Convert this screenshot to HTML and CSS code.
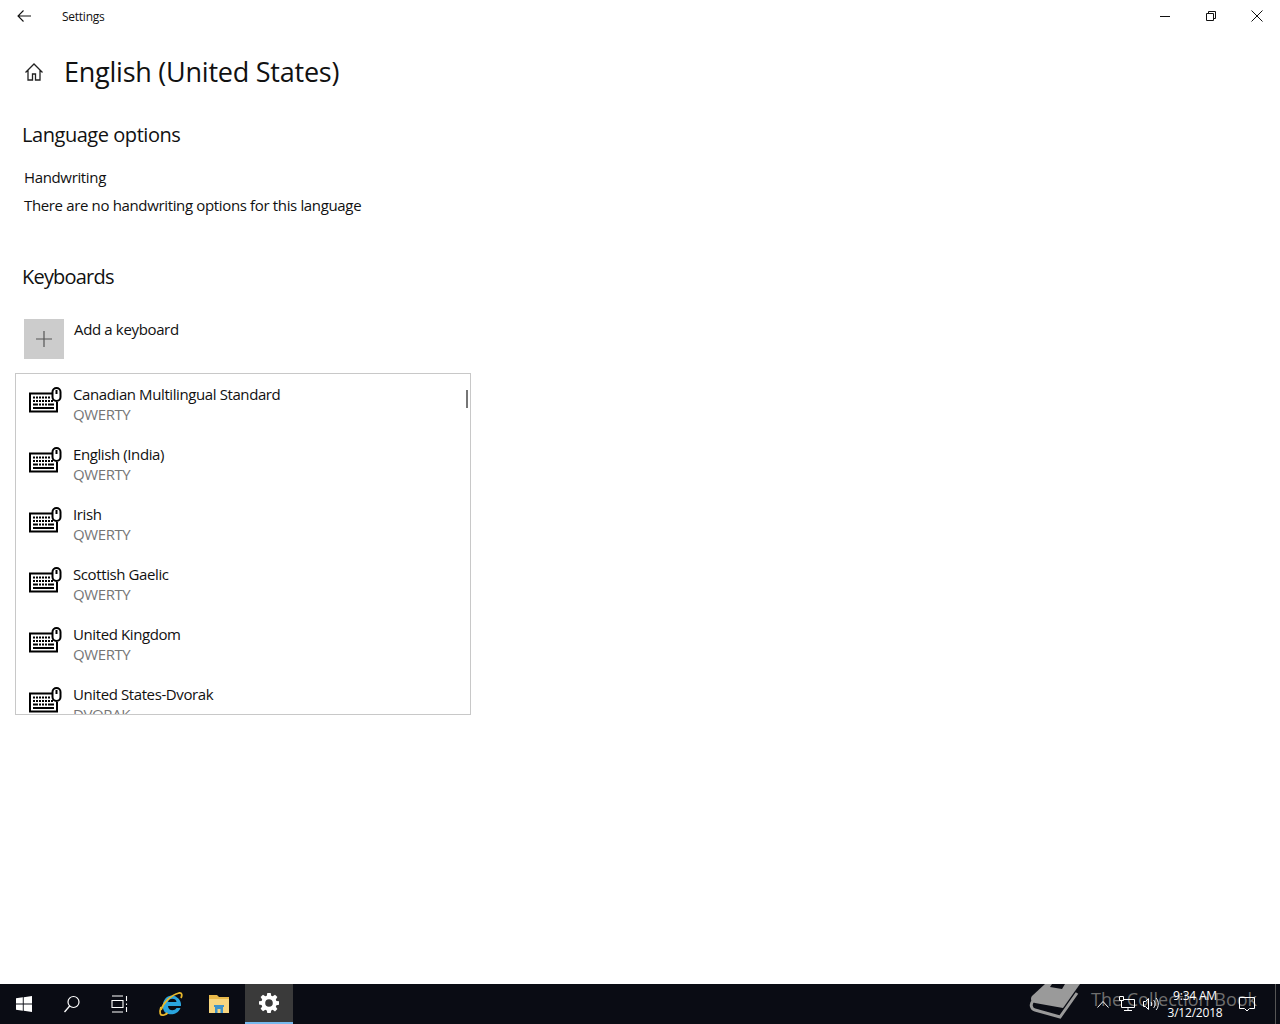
FILE: index.html
```html
<!DOCTYPE html>
<html lang="en">
<head>
<meta charset="utf-8">
<title>Settings</title>
<link rel="stylesheet" href="styles.css">
</head>
<body>
<svg class="defs" width="0" height="0">
  <symbol id="kbd" viewBox="0 0 34 26">
    <path d="M24 6.500H2v18h27V15" fill="none" stroke="#000" stroke-width="2"/>
    <path d="M5 10.500h2M8 10.500h2M11 10.500h2M14 10.500h2M17 10.500h2M20 10.500h2M5 14h2M8 14h2M11 14h2M14 14h2M17 14h2M20 14h2M23 14h2M5 17.500h5M11 17.500h2M14 17.500h2M17 17.500h2M20 17.500h6M5 21h21" fill="none" stroke="#000" stroke-width="2"/>
    <rect x="24.500" y="1" width="8" height="13" rx="4" fill="#fff" stroke="#000" stroke-width="2"/>
    <path d="M28.500 3v4" stroke="#000" stroke-width="2"/>
  </symbol>
</svg>
<main class="window">
  <header class="titlebar">
    <button class="back" aria-label="Back">
      <svg width="16" height="16" viewBox="0 0 16 16"><path d="M15 8H2M7.500 2.500 2 8l5.500 5.500" fill="none" stroke="#111" stroke-width="1.100"/></svg>
    </button>
    <span class="app-title">Settings</span>
    <div class="controls">
      <button class="ctl" aria-label="Minimize"><svg width="12" height="12" viewBox="0 0 12 12"><path d="M1 6.500h10" stroke="#111"/></svg></button>
      <button class="ctl" aria-label="Restore"><svg width="12" height="12" viewBox="0 0 12 12"><path d="M1.500 3.500h7v7h-7zM3.500 3.500v-2h7v7h-2" fill="none" stroke="#111"/></svg></button>
      <button class="ctl" aria-label="Close"><svg width="12" height="12" viewBox="0 0 12 12"><path d="M.5.5l11 11M11.500.5l-11 11" fill="none" stroke="#111"/></svg></button>
    </div>
  </header>
  <div class="page-head">
    <svg class="home" width="20" height="20" viewBox="0 0 20 20"><path d="M1.500 10.500 10 2l8.500 8.500M4 8.500v9.500h4.500v-6h3v6H16V8.500" fill="none" stroke="#222" stroke-width="1.300"/></svg>
    <h1>English (United States)</h1>
  </div>
  <section class="options">
    <h2>Language options</h2>
    <p class="opt-label">Handwriting</p>
    <p class="opt-text">There are no handwriting options for this language</p>
  </section>
  <section class="keyboards">
    <h2>Keyboards</h2>
    <div class="add">
      <span class="plus"><svg width="16" height="16" viewBox="0 0 16 16"><path d="M8 0v16M0 8h16" stroke="#555" stroke-width="1.200"/></svg></span>
      <span class="add-label">Add a keyboard</span>
    </div>
    <div class="list">
      <span class="thumb"></span>
      <div class="item"><svg class="kbd" width="34" height="26"><use href="#kbd"/></svg><div class="names"><div class="name">Canadian Multilingual Standard</div><div class="layout">QWERTY</div></div></div>
      <div class="item"><svg class="kbd" width="34" height="26"><use href="#kbd"/></svg><div class="names"><div class="name">English (India)</div><div class="layout">QWERTY</div></div></div>
      <div class="item"><svg class="kbd" width="34" height="26"><use href="#kbd"/></svg><div class="names"><div class="name">Irish</div><div class="layout">QWERTY</div></div></div>
      <div class="item"><svg class="kbd" width="34" height="26"><use href="#kbd"/></svg><div class="names"><div class="name">Scottish Gaelic</div><div class="layout">QWERTY</div></div></div>
      <div class="item"><svg class="kbd" width="34" height="26"><use href="#kbd"/></svg><div class="names"><div class="name">United Kingdom</div><div class="layout">QWERTY</div></div></div>
      <div class="item"><svg class="kbd" width="34" height="26"><use href="#kbd"/></svg><div class="names"><div class="name">United States-Dvorak</div><div class="layout">DVORAK</div></div></div>
    </div>
  </section>
</main>
<footer class="taskbar">
  <button class="tb" aria-label="Start"><svg width="16" height="16" viewBox="0 0 16 16"><path d="M0 2.300 6.800 1.300v6.200H0zM7.700 1.200 16 0v7.500H7.700zM0 8.400h6.800v6.300L0 13.700zM7.700 8.400H16V16l-8.300-1.200z" fill="#fff"/></svg></button>
  <button class="tb" aria-label="Search"><svg width="18" height="18" viewBox="0 0 18 18"><circle cx="10.500" cy="7" r="5.500" fill="none" stroke="#fff" stroke-width="1.200"/><path d="M6.700 11 1.500 17" stroke="#fff" stroke-width="1.300"/></svg></button>
  <button class="tb" aria-label="Task view"><svg width="18" height="18" viewBox="0 0 18 18"><path d="M1 1h11M1 17h11M1 5.500h11v7H1zM15.500 1v5M15.500 8.500v1.500M15.500 12v5" fill="none" stroke="#fff" stroke-width="1.100"/></svg></button>
  <button class="tb tb-ie" aria-label="Internet Explorer"><svg width="26" height="26" viewBox="0 0 26 26"><path d="M13 4.500a9.500 9.500 0 0 1 10 10.500H10c0 5 6.500 5.500 8.500 2h4c-2.500 6.500-10 7.500-14.500 5C2.500 18 4 6 13 4.500zM10 11h8.500c0-4.500-8-4.500-8.500 0z" fill="#2aa5de" fill-rule="evenodd"/><path d="M3 19C5 12 13 4 21 2c3-.5 3.500 2 2 5" fill="none" stroke="#e8b82c" stroke-width="1.800"/><path d="M3 16C1 22 2 25 6 24c1.500-.5 2.500-1 3.500-2" fill="none" stroke="#e8b82c" stroke-width="1.800"/></svg></button>
  <button class="tb" aria-label="File Explorer"><svg width="20" height="18" viewBox="0 0 20 18"><path d="M0 0h8l2 2h10v3H0z" fill="#e9b94a"/><path d="M0 4h20v14H0z" fill="#f7d67f"/><path d="M6 18v-6H5v-2h10v2h-1v6h-2.500v-4h-3v4z" fill="#3f93c9"/></svg></button>
  <button class="tb tb-active" aria-label="Settings"><svg width="20" height="20" viewBox="0 0 20 20"><path d="M8.300 0h3.400l.5 2.700 1.500.6 2.300-1.600 2.400 2.400-1.600 2.300.6 1.500 2.600.4v3.400l-2.600.5-.6 1.500 1.600 2.300-2.400 2.400-2.300-1.600-1.500.6-.5 2.600H8.300l-.5-2.600-1.500-.6L4 18.200l-2.400-2.400 1.600-2.300-.6-1.500L0 11.600V8.300l2.600-.4.600-1.500-1.600-2.300L4 1.700l2.300 1.600 1.500-.6zM10 6.200a3.800 3.800 0 1 0 0 7.600 3.800 3.800 0 0 0 0-7.600z" fill="#fff" fill-rule="evenodd"/></svg></button>
  <div class="tray">
    <svg class="tray-chevron" width="12" height="8" viewBox="0 0 12 8"><path d="M.5 7.500 6 1.500l5.500 6" fill="none" stroke="#fff"/></svg>
    <svg class="tray-net" width="16" height="16" viewBox="0 0 16 16"><path d="M2.500 3.500h13v8h-13zM9 11.500v3M5 14.500h8" fill="none" stroke="#fff"/><path d="M.5.500h4v4h-4z" fill="#111" stroke="#fff"/></svg>
    <svg class="tray-vol" width="16" height="14" viewBox="0 0 16 14"><path d="M.5 4.500h2l3-3v11l-3-3h-2zM8 5c1 1 1 3 0 4M10.500 3c2 2 2 6 0 8M13 1c3 3 3 9 0 12" fill="none" stroke="#fff"/></svg>
    <div class="clock"><div>9:34 AM</div><div>3/12/2018</div></div>
    <svg class="tray-note" width="16" height="16" viewBox="0 0 16 16"><path d="M.5 1.500h15v11h-5l-2.500 2.500-2.500-2.500h-5z" fill="none" stroke="#fff"/></svg>
    <span class="show-desktop"></span>
  </div>
  <div class="watermark">
    <svg width="55" height="40" viewBox="0 0 55 40"><path d="M20 0h35L38 24 10 19c-4-1-5-4-3-7z" fill="#9a9a9a"/><path d="M27 0h13l-3 5-12-2z" fill="#0a0c14"/><path d="M8 17c-3 3-2 8 2 9l25 7 17-24" fill="none" stroke="#9a9a9a" stroke-width="3"/></svg>
    <span class="wm-text">The Collection Book</span>
  </div>
</footer>
</body>
</html>
```
FILE: styles.css
```css
* { box-sizing: border-box; }
html, body { margin: 0; height: 100%; }
body {
  display: flex;
  flex-direction: column;
  height: 1024px;
  overflow: hidden;
  background: #fff;
  color: #111;
  font-family: "Open Sans", "Noto Sans", "Liberation Sans", sans-serif;
  font-size: 15px;
  letter-spacing: -0.35px;
}
.defs { position: absolute; }
button { border: 0; background: none; padding: 0; margin: 0; color: inherit; font: inherit; display: flex; align-items: center; justify-content: center; }
p, h1, h2 { margin: 0; font-weight: 400; }

.window { flex: 1; min-height: 0; }

.titlebar { display: flex; align-items: center; height: 32px; }
.back { width: 48px; height: 32px; }
.app-title { margin-left: 14px; font-size: 12px; letter-spacing: -0.25px; }
.controls { margin-left: auto; display: flex; }
.ctl { width: 46px; height: 32px; }

.page-head { display: flex; align-items: center; height: 44px; margin-top: 18px; padding-left: 24px; }
.home { flex: none; }
h1 { margin-left: 20px; font-size: 27px; letter-spacing: -0.24px; line-height: 44px; }

.options { padding: 0 0 0 22px; margin-top: 26px; }
h2 { font-size: 20px; line-height: 30px; letter-spacing: -0.45px; }
.opt-label { margin: 17px 0 0 2px; line-height: 20px; }
.opt-text { margin: 8px 0 0 2px; line-height: 20px; }

.keyboards { margin-top: 47px; padding-left: 22px; }
.keyboards h2 { letter-spacing: -0.8px; }
.add { display: flex; align-items: flex-start; margin: 27px 0 0 2px; height: 40px; }
.plus { width: 40px; height: 40px; background: #ccc; display: flex; align-items: center; justify-content: center; }
.add-label { margin-left: 10px; line-height: 20px; }

.list {
  position: relative;
  width: 456px;
  height: 342px;
  margin: 14px 0 0 -7px;
  border: 1px solid #c8c8c8;
  overflow: hidden;
}
.thumb { position: absolute; top: 16px; right: 2px; width: 2px; height: 18px; background: #767676; }
.item { display: flex; align-items: flex-start; height: 60px; padding: 10px 0 0 12px; }
.kbd { flex: none; margin-top: 3px; }
.names { margin-left: 11px; }
.name { line-height: 20px; letter-spacing: -0.4px; }
.layout { line-height: 20px; color: #767676; letter-spacing: -0.4px; }

.taskbar {
  position: relative;
  flex: none;
  display: flex;
  height: 40px;
  background: #0a0c14;
  color: #fff;
}
.tb { width: 48px; height: 40px; position: relative; z-index: 1; }
.tb-ie { margin-left: 3px; }
.tb-active { margin-left: 2px; background: #3a3a3a; border-bottom: 2px solid #76b9ed; }
.tray { position: relative; z-index: 1; margin-left: auto; display: flex; align-items: center; height: 40px; }
.tray-chevron { margin-right: 10px; }
.tray-net { margin-right: 8px; }
.clock { width: 72px; font-size: 12px; line-height: 17px; text-align: center; letter-spacing: -0.2px; }
.tray-note { margin: 0 20px 0 8px; }
.show-desktop { width: 1px; height: 40px; background: #555; margin-right: 4px; }
.watermark { position: absolute; top: 0; right: 23px; display: flex; align-items: flex-start; gap: 11px; height: 40px; overflow: hidden; }
.wm-text { font-size: 18px; line-height: 24px; margin-top: 3px; color: #6e6e6e; letter-spacing: 0; }
```
